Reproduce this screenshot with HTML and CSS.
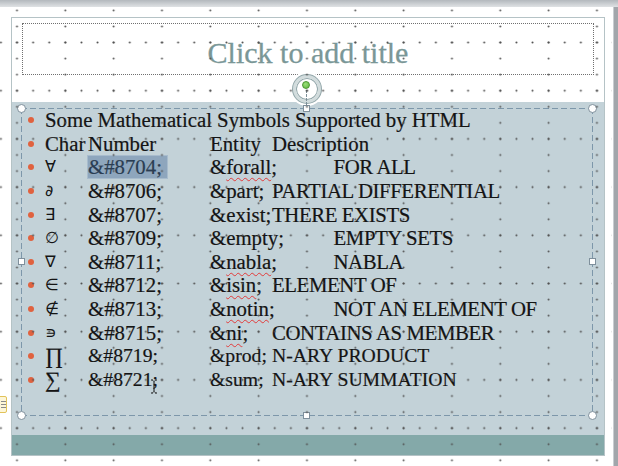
FILE: index.html
```html
<!DOCTYPE html>
<html>
<head>
<meta charset="utf-8">
<link rel="stylesheet" href="styles.css">
</head>
<body>
<div class="window">
  <div class="topshade"></div>
  <div class="main">
    <div class="canvas">
      <div class="slide">
        <div class="title-area">
          <div class="title-box">Click to add title</div>
        </div>
        <div class="body-area">
          <div class="placeholder">
            <ul class="list">
              <li class="row"><span class="full">Some Mathematical Symbols Supported by HTML</span></li>
              <li class="row"><span class="c2">Char</span><span class="c3">Number</span><span class="c4">Entity</span><span class="c5">Description</span></li>
              <li class="row"><span class="c2 sym">&#8704;</span><span class="c3 hl">&amp;#8704;</span><span class="c4">&amp;<span class="sp">forall</span>;</span><span class="c6 desc">FOR ALL</span></li>
              <li class="row"><span class="c2 sym">&#8706;</span><span class="c3">&amp;#8706;</span><span class="c4">&amp;part;</span><span class="c5 desc">PARTIAL DIFFERENTIAL</span></li>
              <li class="row"><span class="c2 sym">&#8707;</span><span class="c3">&amp;#8707;</span><span class="c4">&amp;exist;</span><span class="c5 desc">THERE EXISTS</span></li>
              <li class="row"><span class="c2 sym">&#8709;</span><span class="c3">&amp;#8709;</span><span class="c4">&amp;empty;</span><span class="c6 desc">EMPTY SETS</span></li>
              <li class="row"><span class="c2 sym">&#8711;</span><span class="c3">&amp;#8711;</span><span class="c4">&amp;<span class="sp">nabla</span>;</span><span class="c6 desc">NABLA</span></li>
              <li class="row"><span class="c2 sym">&#8712;</span><span class="c3">&amp;#8712;</span><span class="c4">&amp;<span class="sp">isin</span>;</span><span class="c5 desc">ELEMENT OF</span></li>
              <li class="row"><span class="c2 sym">&#8713;</span><span class="c3">&amp;#8713;</span><span class="c4">&amp;<span class="sp">notin</span>;</span><span class="c6 desc">NOT AN ELEMENT OF</span></li>
              <li class="row"><span class="c2 sym">&#8717;</span><span class="c3">&amp;#8715;</span><span class="c4">&amp;<span class="sp">ni</span>;</span><span class="c5 desc">CONTAINS AS MEMBER</span></li>
              <li class="row times"><span class="c2 bigsym">&#8719;</span><span class="c3">&amp;#8719;</span><span class="c4">&amp;prod;</span><span class="c5">N-ARY PRODUCT</span></li>
              <li class="row times"><span class="c2 bigsym">&#8721;</span><span class="c3">&amp;#8721;</span><span class="c4">&amp;sum;</span><span class="c5">N-ARY SUMMATION</span></li>
            </ul>
            <div class="rot"><span class="knob"></span></div>
            <div class="conn"></div>
            <span class="h hc tl"></span>
            <span class="h hc tr"></span>
            <span class="h hc bl"></span>
            <span class="h hc br"></span>
            <span class="h hs tm"></span>
            <span class="h hs ml"></span>
            <span class="h hs mr"></span>
            <span class="h hs bm"></span>
          </div>
        </div>
        <div class="footer-bar"></div>
      </div>
    </div>
    <div class="edge"></div>
  </div>

  <svg class="grid" width="618" height="466" viewBox="0 0 618 466">
    <defs>
      <pattern id="sparse" x="-7.165" y="2.37" width="48.33" height="16.067" patternUnits="userSpaceOnUse">
        <circle cx="24.165" cy="8.03" r="1.0" fill="#505050"/>
      </pattern>
      <pattern id="dense" x="-7.155" y="18.4" width="16.11" height="48.2" patternUnits="userSpaceOnUse">
        <circle cx="8.055" cy="24.1" r="1.0" fill="#505050"/>
      </pattern>
    </defs>
    <rect x="0" y="0" width="612" height="466" fill="url(#sparse)"/>
    <rect x="0" y="0" width="612" height="466" fill="url(#dense)"/>
  </svg>

  <div class="autofit"></div>

  <svg class="ibeam" width="8" height="15" viewBox="0 0 8 15">
    <path d="M1 1 H3 M5 1 H7 M3 1.5 L4 2.5 L5 1.5 M4 2.5 V12.5 M3 13.5 L4 12.5 L5 13.5 M1 14 H3 M5 14 H7" stroke="#111" stroke-width="1" fill="none"/>
  </svg>
</div>
</body>
</html>
```

FILE: styles.css
```css
* { box-sizing: border-box; }

html, body {
  margin: 0;
  padding: 0;
}

body {
  width: 618px;
  height: 466px;
  overflow: hidden;
  background: #ffffff;
  font-family: "Liberation Serif", "Times New Roman", serif;
}

.window {
  position: relative;
  width: 618px;
  height: 466px;
  display: flex;
  flex-direction: column;
}

.topshade {
  flex: none;
  height: 7px;
  background: linear-gradient(#b3b8bd, #dfe2e4);
}

.main {
  flex: 1;
  display: flex;
}

.canvas {
  flex: 1;
  background: #ffffff;
  padding: 10px 0 0 11px;
}

.edge {
  flex: none;
  width: 5px;
  background: linear-gradient(90deg, #c9cdd1 0 1px, #a2a6ab 1px);
}

.slide {
  width: 594px;
  height: 439px;
  border: 1px solid #b5c3c6;
  display: flex;
  flex-direction: column;
}

.title-area {
  flex: none;
  height: 84px;
  background: #ffffff;
  padding: 5px 0 0 10px;
}

.title-box {
  width: 572px;
  height: 52px;
  border: 1px dotted #707070;
  text-align: center;
  font-size: 30px;
  line-height: 36px;
  padding-top: 11px;
  color: #7a9797;
  -webkit-text-stroke: 0.3px #7a9797;
}

.body-area {
  flex: none;
  height: 333px;
  background: #c3d2d8;
  padding: 7px 0 0 9px;
}

.footer-bar {
  flex: none;
  height: 20px;
  background: #84a9a9;
}

.placeholder {
  position: relative;
  width: 572px;
  height: 308px;
  background:
    repeating-linear-gradient(90deg, #7d97aa 0 6px, transparent 6px 9px) left top / 100% 1px no-repeat,
    repeating-linear-gradient(90deg, #7d97aa 0 6px, transparent 6px 9px) left bottom / 100% 1px no-repeat,
    repeating-linear-gradient(180deg, #7d97aa 0 6px, transparent 6px 9px) left top / 1px 100% no-repeat,
    repeating-linear-gradient(180deg, #7d97aa 0 6px, transparent 6px 9px) right top / 1px 100% no-repeat;
}

.list {
  list-style: none;
  margin: -1px 0 0 0;
  padding: 0;
  font-size: 20.8px;
  line-height: 23.64px;
  color: #141414;
  -webkit-text-stroke: 0.2px #141414;
}

.row {
  display: grid;
  grid-template-columns: 24px 43px 122px 62px 61.5px 1fr;
  height: 23.64px;
  white-space: nowrap;
}

.row > * { grid-row: 1; }

.row::before {
  content: "";
  grid-column: 1;
  grid-row: 1;
  align-self: start;
  width: 6px;
  height: 6px;
  margin: 9px 0 0 7px;
  border-radius: 50%;
  background: #e0623f;
}

.full { grid-column: 2 / -1; }
.c2 { grid-column: 2; }
.c3 { grid-column: 3; }
.c4 { grid-column: 4; }
.c5 { grid-column: 5 / -1; }
.c6 { grid-column: 6; }

.sym {
  font-family: "DejaVu Sans", sans-serif;
  font-size: 16px;
  -webkit-text-stroke: 0;
}

.bigsym {
  font-size: 22px;
}

.times {
  font-size: 19.7px;
}

.desc {
  letter-spacing: -0.4px;
}

.hl {
  justify-self: start;
  width: 81px;
  margin-left: -1px;
  padding-left: 1px;
  background: #8ea6bd;
  color: #2a3d52;
  -webkit-text-stroke: 0.2px #2a3d52;
  box-shadow: inset 0 0 0 1px #a8bccd;
}

.sp {
  text-decoration: underline wavy #e23a3a;
  text-decoration-thickness: 1px;
  text-underline-offset: 3px;
  text-decoration-skip-ink: none;
}

.h {
  position: absolute;
  background: #ffffff;
  border: 1px solid #7f909c;
}

.hc {
  width: 9px;
  height: 9px;
  border-radius: 50%;
}

.hs {
  width: 7px;
  height: 7px;
}

.tl { left: -4px; top: -4px; }
.tr { left: 567px; top: -4px; }
.bl { left: -4px; top: 303px; }
.br { left: 567px; top: 303px; }
.tm { left: 282px; top: -3px; }
.ml { left: -3px; top: 150px; }
.mr { left: 568px; top: 150px; }
.bm { left: 282px; top: 304px; }

.rot {
  position: absolute;
  left: 272px;
  top: -33px;
  width: 28px;
  height: 28px;
  border-radius: 50%;
  background: #ffffff;
  border: 3px solid #d2dcdd;
  box-shadow: inset 0 0 0 1px #93a7aa, 0 0 0 1px #93a7aa, 0 0 0 3px #ffffff;
}

.knob {
  position: absolute;
  left: 6px;
  top: 3px;
  width: 8px;
  height: 8px;
  border-radius: 50%;
  background: radial-gradient(circle at 40% 35%, #9be07a, #5cb43c);
  border: 1px solid #4b9631;
}

.conn {
  position: absolute;
  left: 285px;
  top: -18px;
  height: 15px;
  border-left: 1px dashed #7d8f98;
}

.grid {
  position: absolute;
  left: 0;
  top: 0;
  pointer-events: none;
}

.autofit {
  position: absolute;
  left: -9px;
  top: 396px;
  width: 16px;
  height: 17px;
  border: 1px solid #e2c35a;
  border-radius: 2px;
  background:
    linear-gradient(#8a8a8a, #8a8a8a) 9px 4px / 5px 1px no-repeat,
    linear-gradient(#8a8a8a, #8a8a8a) 9px 7px / 5px 1px no-repeat,
    linear-gradient(#8a8a8a, #8a8a8a) 9px 10px / 5px 1px no-repeat,
    #fdf6d8;
}

.ibeam {
  position: absolute;
  left: 150px;
  top: 379px;
}
```
